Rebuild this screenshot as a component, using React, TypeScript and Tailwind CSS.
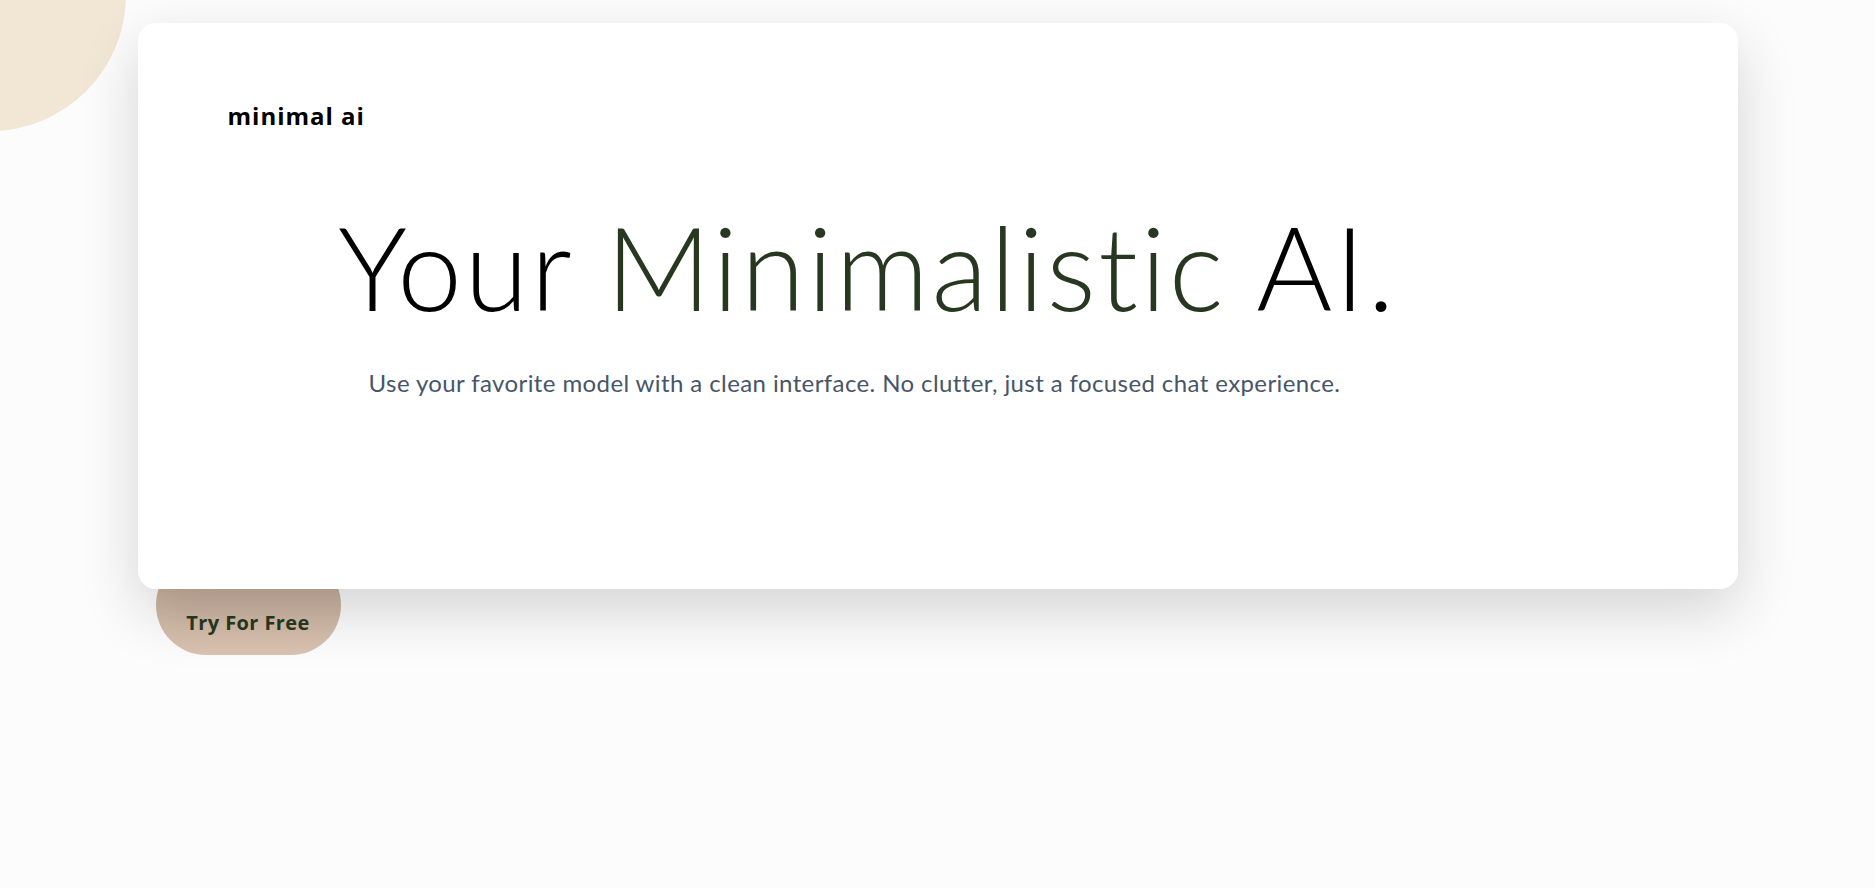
import React from "react";

export default function App() {
  return (
    <div
      className="relative min-h-[888px] w-full overflow-hidden bg-[#fcfcfc]"
      style={{ fontFamily: "Lato, 'Noto Sans', sans-serif" }}
    >
      <div className="absolute left-[-146px] top-[-141px] h-[272px] w-[272px] rounded-full bg-[#f2e6d5]" />
      <div className="relative mx-auto w-[1600px] pt-[23px]">
        <div className="relative z-10 flex h-[566px] flex-col rounded-[18px] bg-white pl-[90px] pr-[244px] pt-[79px] shadow-[0_22px_60px_rgba(0,0,0,0.16)]">
          <div
            className="text-[24px] font-bold leading-[28px] tracking-[1px] text-black"
            style={{ fontFamily: "'Open Sans', sans-serif" }}
          >
            minimal ai
          </div>
          <h1 className="ml-[14px] mt-[79px] text-center text-[116px] font-light leading-[116px] tracking-[2.5px] text-black">
            Your <span className="text-[#283820]">Minimalistic</span> AI.
          </h1>
          <p className="mr-[12px] mt-[42px] text-center text-[24px] leading-[32px] tracking-[0.4px] text-[#475569]">
            Use your favorite model with a clean interface. No clutter, just a focused chat experience.
          </p>
        </div>
        <div className="relative z-0 ml-[18px] mt-[-34px] flex h-[100px] w-[185px] items-end justify-center rounded-full bg-gradient-to-b from-[#bea796] to-[#dac3b0] pb-[18px]">
          <span
            className="text-[20px] font-bold leading-[28px] tracking-[0.4px] text-[#283820]"
            style={{ fontFamily: "'Open Sans', sans-serif" }}
          >
            Try For Free
          </span>
        </div>
      </div>
    </div>
  );
}
